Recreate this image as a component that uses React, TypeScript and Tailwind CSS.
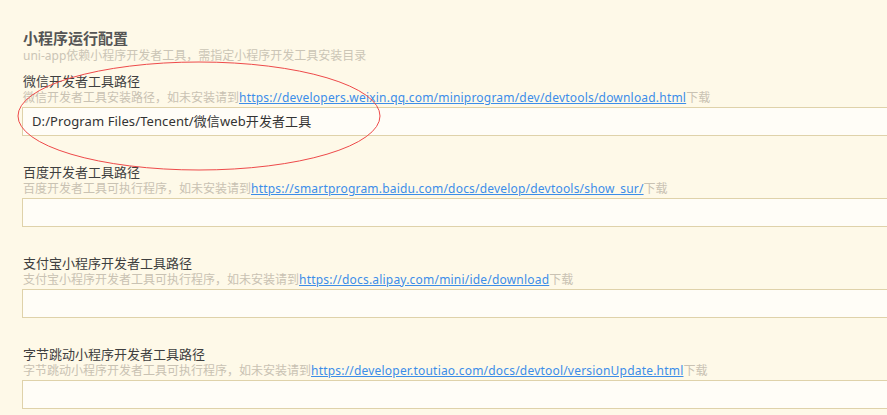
import React from "react";

const font = { fontFamily: '"Noto Sans", "Noto Sans CJK SC", sans-serif' };

type Item = {
  label: string;
  desc: string;
  url: string;
  value?: string;
};

const items: Item[] = [
  {
    label: "微信开发者工具路径",
    desc: "微信开发者工具安装路径，如未安装请到",
    url: "https://developers.weixin.qq.com/miniprogram/dev/devtools/download.html",
    value: "D:/Program Files/Tencent/微信web开发者工具",
  },
  {
    label: "百度开发者工具路径",
    desc: "百度开发者工具可执行程序，如未安装请到",
    url: "https://smartprogram.baidu.com/docs/develop/devtools/show_sur/",
  },
  {
    label: "支付宝小程序开发者工具路径",
    desc: "支付宝小程序开发者工具可执行程序，如未安装请到",
    url: "https://docs.alipay.com/mini/ide/download",
  },
  {
    label: "字节跳动小程序开发者工具路径",
    desc: "字节跳动小程序开发者工具可执行程序，如未安装请到",
    url: "https://developer.toutiao.com/docs/devtool/versionUpdate.html",
  },
];

function Field({ item }: { item: Item }) {
  return (
    <div className="flex flex-col">
      <div className="pl-[1px] text-[13px] leading-[18px] text-[#3f3f3f]">{item.label}</div>
      <div className="pl-[1px] text-[12px] leading-[16px] text-[#c9c2b3] whitespace-nowrap">
        {item.desc}
        <a href="#" className="text-[#3c8de8] underline tracking-[0.2px]">
          {item.url}
        </a>
        下载
      </div>
      <div className="mt-[1px] h-[29px] w-[880px] border border-[#dfd2aa] bg-[#fffdf7] flex items-center pl-[9px] text-[13px] text-[#333] tracking-[0.1px]">
        {item.value}
      </div>
    </div>
  );
}

export default function App() {
  return (
    <div className="relative w-[887px] h-[415px] overflow-hidden bg-[#fef9e8]" style={font}>
      <div className="flex flex-col pl-[22px] pt-[28px] gap-[27px]">
        <div className="flex flex-col -mb-[19px]">
          <div className="pl-[1px] text-[15px] leading-[20px] font-bold text-[#555]">小程序运行配置</div>
          <div className="pl-[1px] text-[12px] leading-[16px] text-[#cbc5b6]">
            uni-app依赖小程序开发者工具，需指定小程序开发工具安装目录
          </div>
        </div>
        {items.map((item) => (
          <Field key={item.label} item={item} />
        ))}
      </div>
      <svg className="absolute left-0 top-0 pointer-events-none" width="887" height="415">
        <ellipse cx="199" cy="116" rx="181" ry="54" fill="none" stroke="#ee4a4a" strokeWidth="1" />
      </svg>
    </div>
  );
}
